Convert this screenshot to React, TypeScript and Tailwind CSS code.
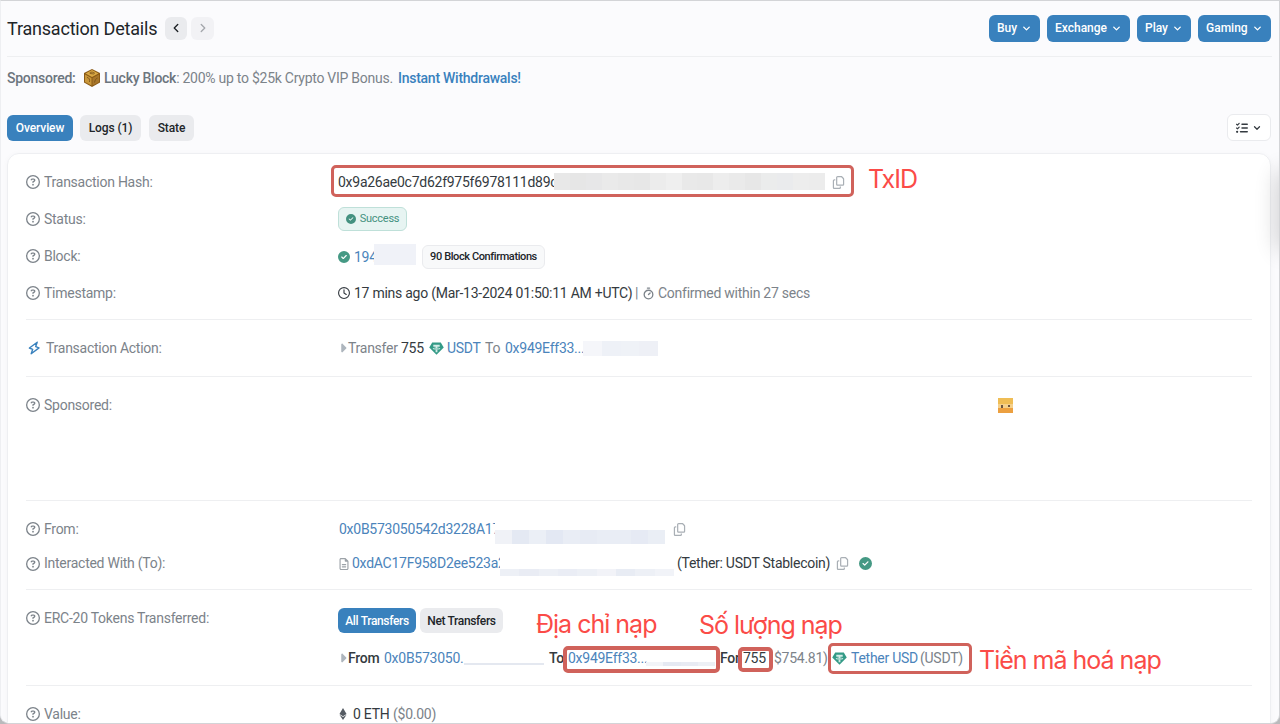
import type { ReactNode } from "react";
import { ChevronDown, ChevronLeft, ChevronRight, Timer } from "lucide-react";
import {
  FaCaretRight,
  FaCircleCheck,
  FaEthereum,
  FaListCheck,
  FaRegCircleQuestion,
  FaRegClock,
  FaRegCopy,
  FaRegFileLines,
} from "react-icons/fa6";

function Cell({ w, className = "", children }: { w: string; className?: string; children: ReactNode }) {
  return <span className={`${w} shrink-0 whitespace-nowrap ${className}`}>{children}</span>;
}

function Row({ h, label, children, icon }: { h: string; label: string; children?: ReactNode; icon?: ReactNode }) {
  return (
    <div className={`${h} flex shrink-0 items-center`}>
      <div className="flex w-[312px] shrink-0 items-center whitespace-nowrap text-[#7c838a]">
        {icon ?? <FaRegCircleQuestion className="mr-[4px] size-[14px]" />}
        {label}
      </div>
      {children}
    </div>
  );
}

function Divider({ className }: { className: string }) {
  return <div className={`${className} h-px w-[1226px] shrink-0 bg-[#eeeff1]`} />;
}

function Blocks({ colors, className }: { colors: string[]; className: string }) {
  return (
    <span className={`flex shrink-0 ${className}`}>
      {colors.map((c, i) => (
        <span key={i} className="flex-1" style={{ background: c }} />
      ))}
    </span>
  );
}

function Tether() {
  return (
    <svg viewBox="0 0 28 24" className="h-[13px] w-[15px] shrink-0">
      <path d="M6 1h16l5.500 9L14 23.500.5 10z" fill="#339a86" />
      <path d="M8 5h12v3.500h-4.300v2.200c3.300.2 5.300.8 5.300 1.600s-2 1.500-5.300 1.700V19h-3.400v-5c-3.300-.2-5.300-.9-5.300-1.700s2-1.400 5.300-1.600V8.500H8z" fill="#d3ece7" />
      <path d="M9 12.200c3 .9 7 .9 10 0" fill="none" stroke="#339a86" />
    </svg>
  );
}

function Cube() {
  return (
    <svg viewBox="0 0 32 36" className="mr-[4px] ml-[8px] h-[18px] w-[16px] shrink-0">
      <path d="M16 0 32 8v19l-16 9L0 27V8z" fill="#8a5a16" />
      <path d="M16 2 29 9l-13 7L3 9z" fill="#d9a845" />
      <path d="M2 11l13 7v15L2 26z" fill="#c8963a" />
      <path d="M30 11l-13 7v15l13-7z" fill="#a8762a" />
      <path d="M11 8c3-3 8-2 11 1M6 17c4 0 6 4 5 9M21 27c1-5 3-8 6-9M12 9l8 1" fill="none" stroke="#6f4a18" strokeWidth="1.500" />
    </svg>
  );
}

function Bolt() {
  return (
    <svg viewBox="0 0 12 14" className="mr-[6px] ml-[2px] h-[14px] w-[12px] shrink-0">
      <path d="M9.200 1.200 1.400 7l3.300 1.300-1.500 4.500L11 6.900 7.700 5.600z" fill="none" stroke="#3981bd" strokeWidth="1.400" strokeLinejoin="round" />
    </svg>
  );
}

function MenuButton({ w, label }: { w: string; label: string }) {
  return (
    <button className={`${w} flex h-[27px] items-center justify-between rounded-[6px] bg-[#3981bd] px-[8px] text-[12px] font-medium whitespace-nowrap text-white`}>
      {label}
      <ChevronDown className="size-[11px]" strokeWidth={3} />
    </button>
  );
}

const hashMask = ["#e8e8e8", "#e6e6e6", "#e7e7e8", "#eaeaea", "#e8e8e8", "#e7e7e7", "#ececec", "#efefef", "#e9e9e9", "#e8e8e8", "#ededed", "#eaeaea", "#e7e7e7", "#ebecec", "#eaebed", "#ededed", "#ececec"];
const fromMask = ["#f0f2f7", "#e4e9f3", "#ebeff6", "#e3e8f3", "#e9edf5", "#e7ebf4", "#e9edf5", "#e9edf5", "#e6eaf4", "#eaeef5"];

export default function App() {
  return (
    <div className="h-[724px] w-[1280px] overflow-hidden bg-[#b9babc] font-['Roboto',sans-serif]">
      <div className="relative flex h-[724px] flex-col overflow-hidden rounded-b-[9px] border border-[#d3d4d7] border-l-[#eeeff2] bg-[#fbfbfd] pl-[6px]">
        <header className="flex h-[55px] shrink-0 items-center pb-px">
          <Cell w="w-[158px]" className="text-[18px] tracking-[-0.2px] text-[#212529]">Transaction Details</Cell>
          <button className="flex h-[23px] w-[22px] items-center justify-center rounded-[6px] bg-[#eaebee]">
            <ChevronLeft className="size-[14px] text-[#212529]" strokeWidth={2.4} />
          </button>
          <button className="ml-[4px] flex h-[23px] w-[23px] items-center justify-center rounded-[6px] bg-[#f2f2f5]">
            <ChevronRight className="size-[14px] text-[#a6a9ae]" strokeWidth={2.4} />
          </button>
          <nav className="ml-auto flex gap-[7px] pr-[8px]">
            <MenuButton w="w-[51px]" label="Buy" />
            <MenuButton w="w-[83px]" label="Exchange" />
            <MenuButton w="w-[54px]" label="Play" />
            <MenuButton w="w-[73px]" label="Gaming" />
          </nav>
        </header>
        <div className="mr-[7px] h-px shrink-0 bg-[#eeeff1]" />
        <div className="flex h-[42px] shrink-0 items-center text-[14px] tracking-[-0.26px] whitespace-nowrap text-[#7c838a]">
          <b className="w-[69px] font-medium text-[#6c757d]">Sponsored:</b>
          <Cube />
          <span className="w-[294px]"><b className="font-medium text-[#6c757d]">Lucky Block</b>: 200% up to $25k Crypto VIP Bonus.</span>
          <span className="font-medium text-[#3981bd]">Instant Withdrawals!</span>
        </div>
        <div className="mt-[15px] flex h-[27px] shrink-0 items-center gap-[7px] text-[12px] font-medium tracking-[-0.1px] text-[#212529]">
          <button className="h-[26px] w-[66px] rounded-[6px] bg-[#3981bd] text-white">Overview</button>
          <button className="h-[26px] w-[61px] rounded-[6px] bg-[#eaebee]">Logs (1)</button>
          <button className="ml-[1px] h-[26px] w-[45px] rounded-[6px] bg-[#eaebee]">State</button>
          <button className="mr-[8px] ml-auto flex h-[27px] w-[44px] items-center justify-center gap-[4px] rounded-[6px] border border-[#eaebee] bg-white text-[#343a40]">
            <FaListCheck className="size-[12px]" />
            <ChevronDown className="size-[10px]" strokeWidth={3} />
          </button>
        </div>
        <main className="mt-[12px] flex h-[640px] w-[1264px] shrink-0 flex-col rounded-[12px] border border-[#eeeff2] bg-white pt-[10px] pl-[18px] text-[14px] tracking-[-0.26px] shadow-[0_1px_6px_#20304008]">
          <Row h="h-[36px]" label="Transaction Hash:">
            <Cell w="w-[216px]" className="overflow-hidden text-[#343a40]">0x9a26ae0c7d62f975f6978111d89c</Cell>
            <Blocks colors={hashMask} className="mb-[2px] h-[17px] w-[271px]" />
            <FaRegCopy className="ml-[7px] size-[13px] text-[#a9afb5]" />
          </Row>
          <Row h="h-[38px]" label="Status:">
            <span className="flex h-[24px] w-[69px] items-center justify-center rounded-[6px] border border-[#bfe0d9] bg-[#e7f4f2] text-[11px] text-[#449180]">
              <FaCircleCheck className="mr-[4px] size-[10px]" />
              Success
            </span>
          </Row>
          <Row h="h-[36px]" label="Block:">
            <FaCircleCheck className="mt-px size-[12px] text-[#459984]" />
            <Cell w="w-[20px]" className="mt-[2px] ml-[4px] overflow-hidden text-[#4b84bb]">194</Cell>
            <span className="mb-[3px] h-[21px] w-[42px] bg-[#f0f2f8]" />
            <span className="mt-[2px] ml-[6px] flex h-[24px] w-[123px] items-center justify-center rounded-[6px] border border-[#eaebee] bg-[#f8f9fa] text-[11px] font-medium tracking-[-0.4px] whitespace-nowrap text-[#212529]">90 Block Confirmations</span>
          </Row>
          <Row h="h-[38px]" label="Timestamp:">
            <FaRegClock className="size-[12px] text-[#343a40]" />
            <Cell w="w-[281px]" className="ml-[4px] text-[#343a40]">17 mins ago (Mar-13-2024 01:50:11 AM +UTC)</Cell>
            <Cell w="w-[7px]" className="text-[#7c838a]">|</Cell>
            <Timer className="size-[13px] text-[#7c838a]" strokeWidth={2.4} />
            <Cell w="w-[160px]" className="ml-[3px] text-[#7c838a]">Confirmed within 27 secs</Cell>
          </Row>
          <Divider className="mt-[7px]" />
          <div className="h-[10px] shrink-0" />
          <Row h="h-[36px]" label="Transaction Action:" icon={<Bolt />}>
            <FaCaretRight viewBox="0 0 256 512" className="h-[14px] w-[10px] text-[#adb5bd]" />
            <Cell w="w-[53px]" className="text-[#7c838a]">Transfer</Cell>
            <Cell w="w-[28px]" className="text-[#343a40]">755</Cell>
            <Tether />
            <Cell w="w-[38px]" className="ml-[3px] text-[#4b84bb]">USDT</Cell>
            <Cell w="w-[20px]" className="text-[#7c838a]">To</Cell>
            <Cell w="w-[78px]" className="text-[#4b84bb]">0x949Eff33...</Cell>
            <Blocks colors={["#f5f6fa", "#eef1f7", "#eff2f7", "#eef0f6"]} className="h-[15px] w-[75px]" />
          </Row>
          <Divider className="mt-[10px]" />
          <div className="h-[10px] shrink-0" />
          <Row h="h-[36px]" label="Sponsored:">
            <svg viewBox="0 0 15 15" className="ml-[660px] size-[15px] shrink-0">
              <path d="M0 0h15v15H0z" fill="#efbd55" />
              <path d="M0 6h15v5H0z" fill="#f5d08a" />
              <path d="M0 10h15v5H0z" fill="#eca040" />
              <path d="M3 7h2v3H3zm7 0h2v2h-2z" fill="#6c5541" />
            </svg>
          </Row>
          <Divider className="mt-[77px]" />
          <div className="h-[10px] shrink-0" />
          <Row h="h-[36px]" label="From:">
            <Cell w="w-[156px]" className="ml-[1px] overflow-hidden text-[#4b84bb]">0x0B573050542d3228A17</Cell>
            <Blocks colors={fromMask} className="mt-[16px] h-[14px] w-[170px]" />
            <FaRegCopy className="ml-[8px] size-[13px] text-[#a9afb5]" />
          </Row>
          <Row h="h-[33px]" label="Interacted With (To):">
            <FaRegFileLines className="size-[12px] text-[#9ca2a8]" />
            <Cell w="w-[148px]" className="ml-[2px] overflow-hidden text-[#4b84bb]">0xdAC17F958D2ee523a2</Cell>
            <Blocks colors={["#edf0f6", "#e9ecf4", "#edf0f6", "#eaedf5", "#edf0f6", "#f2f3f8", "#e8ecf4", "#edf0f6", "#f1f3f8"]} className="mt-[17px] h-[7px] w-[174px]" />
            <Cell w="w-[159px]" className="ml-[3px] text-[#343a40]">(Tether: USDT Stablecoin)</Cell>
            <FaRegCopy className="size-[13px] text-[#a9afb5]" />
            <FaCircleCheck className="ml-[10px] size-[13px] text-[#459984]" />
          </Row>
          <Divider className="mt-[9px]" />
          <div className="h-[10px] shrink-0" />
          <Row h="h-[36px]" label="ERC-20 Tokens Transferred:">
            <button className="mt-[5px] h-[25px] w-[78px] rounded-[6px] bg-[#3981bd] text-[12px] font-medium tracking-[-0.34px] whitespace-nowrap text-white">All Transfers</button>
            <button className="mt-[5px] ml-[4px] h-[25px] w-[83px] rounded-[6px] bg-[#eaebee] text-[12px] font-medium tracking-[-0.34px] whitespace-nowrap text-[#212529]">Net Transfers</button>
          </Row>
          <div className="mt-[4px] flex h-[36px] shrink-0 items-center pl-[312px]">
            <FaCaretRight viewBox="0 0 256 512" className="h-[14px] w-[10px] text-[#adb5bd]" />
            <Cell w="w-[36px]" className="font-medium text-[#343a40]">From</Cell>
            <Cell w="w-[80px]" className="text-[#4b84bb]">0x0B573050.</Cell>
            <span className="mt-[12px] h-[2px] w-[80px] bg-[#e4e8f0]" />
            <Cell w="w-[18px]" className="ml-[5px] font-medium text-[#343a40]">To</Cell>
            <Cell w="w-[78px]" className="ml-[1px] text-[#4b84bb]">0x949Eff33...</Cell>
            <Blocks colors={["#f2f4f8", "#e5e9f2", "#e8ebf3", "#edf0f5"]} className="mt-[12px] h-[4px] w-[69px]" />
            <Cell w="w-[23px]" className="ml-[5px] font-medium text-[#343a40]">For</Cell>
            <Cell w="w-[31px]" className="text-[#343a40]">755</Cell>
            <Cell w="w-[58px]" className="text-[#7c838a]">$754.81)</Cell>
            <Tether />
            <Cell w="w-[69px]" className="ml-[4px] text-[#4b84bb]">Tether USD</Cell>
            <Cell w="w-[50px]" className="text-[#7c838a]">(USDT)</Cell>
          </div>
          <Divider className="mt-[9px]" />
          <div className="h-[10px] shrink-0" />
          <Row h="h-[36px]" label="Value:">
            <FaEthereum className="mr-[4px] ml-[-1px] size-[12px] text-[#555b63]" />
            <Cell w="w-[40px]" className="text-[#343a40]">0 ETH</Cell>
            <Cell w="w-[50px]" className="text-[#7c838a]">($0.00)</Cell>
          </Row>
        </main>

        <div className="absolute top-[172px] -right-[16px] h-[75px] w-[14px] rounded-full shadow-[0_0_22px_4px_#00000030]" />
        <div className="absolute top-[164px] left-[330px] h-[32px] w-[523px] rounded-[5px] border-[3.5px] border-[#d0625b]" />
        <div className="absolute top-[645px] left-[562px] h-[27px] w-[157px] rounded-[5px] border-4 border-[#d0625b]" />
        <div className="absolute top-[646px] left-[737px] h-[25px] w-[35px] rounded-[5px] border-4 border-[#d0625b]" />
        <div className="absolute top-[642px] left-[827px] h-[31px] w-[144px] rounded-[5px] border-[3.5px] border-[#d0625b]" />
        <div className="font-['Inter',sans-serif] text-[25px] leading-[30px] tracking-[-1px] whitespace-nowrap text-[#fb4b47]">
          <span className="absolute top-[163px] left-[867px]">TxID</span>
          <span className="absolute top-[608px] left-[535px]">Địa chỉ nạp</span>
          <span className="absolute top-[609px] left-[698px]">Số lượng nạp</span>
          <span className="absolute top-[644px] left-[978px]">Tiền mã hoá nạp</span>
        </div>
      </div>
    </div>
  );
}
